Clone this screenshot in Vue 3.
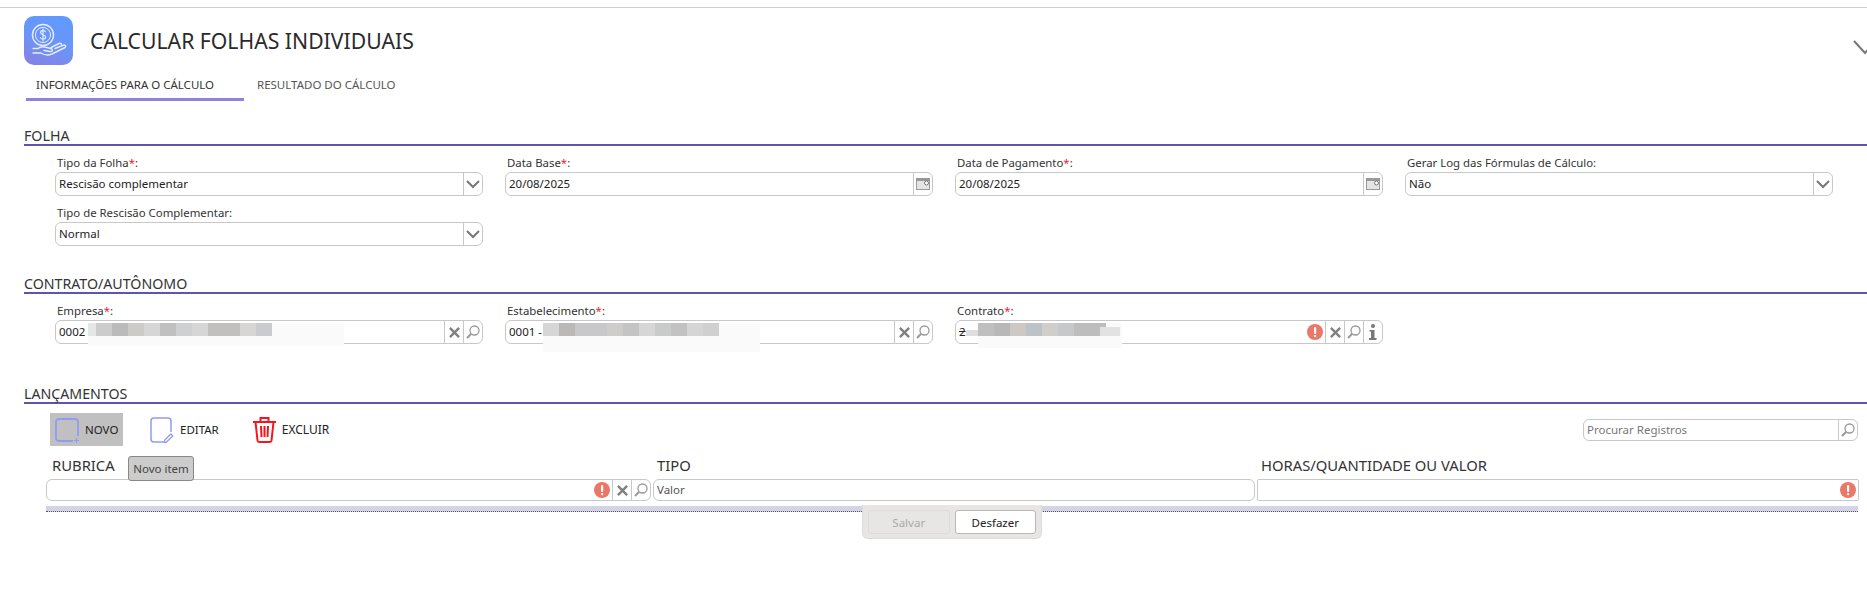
<script setup>
const folha = [
  { label: 'Tipo da Folha', req: true, value: 'Rescisão complementar', kind: 'select' },
  { label: 'Data Base', req: true, value: '20/08/2025', kind: 'date' },
  { label: 'Data de Pagamento', req: true, value: '20/08/2025', kind: 'date' },
  { label: 'Gerar Log das Fórmulas de Cálculo', req: false, value: 'Não', kind: 'select' },
  { label: 'Tipo de Rescisão Complementar', req: false, value: 'Normal', kind: 'select' }
]
const contrato = [
  { label: 'Empresa', value: '0002', info: false, left: 32, wide: 256, h: 23, cls: 'half',
    strip: ['#e6e6e6', '#cccccc', '#bbbbbb', '#cdcbc8', '#d6d6d6', '#c0c0c0', '#cfd0d2', '#d6d6d6', '#c2c0be', '#c2c0be', '#d8d6d4', '#c9cbce'] },
  { label: 'Estabelecimento', value: '0001 -', info: false, left: 37, wide: 217, h: 29, cls: '',
    strip: ['#d6d6d6', '#bbb8b5', '#c8c8ca', '#c8c8ca', '#cfcdca', '#c4c4c4', '#d6d6d6', '#c9cbca', '#c2c2c2', '#d5d5d5', '#d0d0d0'] },
  { label: 'Contrato', value: '2', info: true, left: 22, wide: 144, h: 25, cls: 'tails',
    strip: ['#bfbfbf', '#b8b8b8', '#cdc8c4', '#bcc2c6', '#d0cecb', '#c6c8ca', '#bdbdbd', '#bdbdbd'] }
]
</script>

<template>
  <div class="page">
    <header class="head">
      <div class="logo">
        <svg width="49" height="49" viewBox="0 0 49 49" fill="none" stroke="#e6ecff" stroke-width="1.4" stroke-linecap="round" stroke-linejoin="round">
          <circle cx="19" cy="19" r="10.5" />
          <circle cx="19" cy="19" r="7.6" stroke-width="1" />
          <path d="M21.4 15.8c-.6-1-1.4-1.4-2.4-1.4-1.4 0-2.4.8-2.4 2.1 0 2.9 5 1.6 5 4.5 0 1.3-1.1 2.2-2.6 2.2-1.1 0-2-.5-2.6-1.5M19 13v12" stroke-width="1.2" />
          <path d="M9 37h8c4 2.5 7.6 2.5 11 1l13-6.500c1.500-1 .2-3-1.500-2.400L31 32.500" />
          <path d="M9 32.500h5c2-1.700 4-2.300 6.500-1.500l6.500 1.500c2.300.8 1.500 3.500-1 3l-6-1" />
          <path d="M27 31.500l8-4c1.500-.6 2.700.3 2.600 1.300" />
        </svg>
      </div>
      <h1 class="title">CALCULAR FOLHAS INDIVIDUAIS</h1>
      <svg class="collapse" width="14" height="16" viewBox="0 0 14 16" fill="none" stroke="#777" stroke-width="2"><path d="M1 1l11 12 6-7" /></svg>
    </header>

    <nav class="tabs">
      <span class="tab active">INFORMAÇÕES PARA O CÁLCULO</span>
      <span class="tab">RESULTADO DO CÁLCULO</span>
    </nav>

    <section class="sec sec-folha">
      <h2 class="sec-title">FOLHA</h2>
      <div class="fields">
        <div v-for="f in folha" :key="f.label" class="field">
          <label class="lab">{{ f.label }}<em v-if="f.req">*</em>:</label>
          <div class="box">
            <span class="val">{{ f.value }}</span>
            <span class="btn">
              <svg v-if="f.kind === 'select'" width="14" height="9" viewBox="0 0 14 9" fill="none" stroke="#777" stroke-width="2"><path d="M1 1l6 6 6-6" /></svg>
              <svg v-else width="14" height="12" viewBox="0 0 14 12"><rect x=".5" y=".5" width="13" height="11" fill="#e4e4e4" stroke="#999" /><rect x="1" y="1" width="12" height="2" fill="#999" /><circle cx="10.500" cy="5" r="2" fill="#fff" stroke="#777" /></svg>
            </span>
          </div>
        </div>
      </div>
    </section>

    <section class="sec sec-contrato">
      <h2 class="sec-title">CONTRATO/AUTÔNOMO</h2>
      <div class="fields">
        <div v-for="c in contrato" :key="c.label" class="field">
          <label class="lab">{{ c.label }}<em>*</em>:</label>
          <div class="box">
            <span class="val" :class="{ struck: c.info }">{{ c.value }}</span>
            <div class="mask" :class="c.cls" :style="{ left: c.left + 'px', width: c.wide + 'px', height: c.h + 'px' }">
              <i v-for="(s, i) in c.strip" :key="i" :style="{ background: s }"></i>
            </div>
            <svg v-if="c.info" class="alert" width="16" height="16" viewBox="0 0 16 16"><circle cx="8" cy="8" r="8" fill="#ea7868" /><rect x="7" y="3" width="2.200" height="7" rx="1" fill="#fff" /><rect x="7" y="11" width="2.200" height="2.200" rx="1" fill="#fff" /></svg>
            <span class="btn">
              <svg width="11" height="11" viewBox="0 0 12 12" stroke="#808080" stroke-width="2.600"><path d="M1 1l10 10M11 1L1 11" /></svg>
            </span>
            <span class="btn">
              <svg width="14" height="14" viewBox="0 0 14 14" fill="none" stroke="#999" stroke-width="1.300"><circle cx="8.500" cy="5.500" r="4.500" /><path d="M5.200 8.800L1 13" stroke-width="2" /></svg>
            </span>
            <span v-if="c.info" class="btn">
              <svg width="10" height="16" viewBox="0 0 10 16" fill="#777"><circle cx="5" cy="2" r="2" /><path d="M1.500 6h5v8h2v2H1v-2h2V7.500H1.500z" /></svg>
            </span>
          </div>
        </div>
      </div>
    </section>

    <section class="sec sec-lanc">
      <h2 class="sec-title">LANÇAMENTOS</h2>
      <div class="toolbar">
        <button class="tool hover">
          <svg width="26" height="26" viewBox="0 0 26 26" fill="none" stroke="#8f9cf5" stroke-width="1.800"><path d="M19 24H5a3 3 0 0 1-3-3V5a3 3 0 0 1 3-3h16a3 3 0 0 1 3 3v14" /><path d="M22.500 21v5M20 23.500h5" stroke-width="1.200" /></svg>
          NOVO
        </button>
        <button class="tool">
          <svg width="26" height="28" viewBox="0 0 26 28" fill="none" stroke="#8f9cf5" stroke-width="1.500"><path d="M15 26H5a3 3 0 0 1-3-3V5a3 3 0 0 1 3-3h14a3 3 0 0 1 3 3v11" /><path d="M17 26.500l-1.500-.2.300-2.300 6-6 2 2z" stroke-width="1.300" /></svg>
          EDITAR
        </button>
        <button class="tool del">
          <svg width="25" height="27" viewBox="0 0 25 27" fill="none" stroke="#f5151c" stroke-width="2"><path d="M1 6h23" /><path d="M8.500 5V2h8v3" /><path d="M3.500 6l2 18.500c.1 1 .8 1.500 1.700 1.500h10.600c.9 0 1.600-.5 1.700-1.500L21.500 6" /><path d="M9 10l.5 11M12.500 10v11M16 10l-.5 11" /></svg>
          EXCLUIR
        </button>
        <div class="search">
          <span class="val ph">Procurar Registros</span>
          <span class="btn">
            <svg width="14" height="14" viewBox="0 0 14 14" fill="none" stroke="#999" stroke-width="1.300"><circle cx="8.500" cy="5.500" r="4.500" /><path d="M5.200 8.800L1 13" stroke-width="2" /></svg>
          </span>
        </div>
      </div>

      <div class="grid">
        <div class="col">
          <div class="col-head first">RUBRICA</div>
          <div class="box small">
            <span class="val"></span>
            <svg class="alert" width="16" height="16" viewBox="0 0 16 16"><circle cx="8" cy="8" r="8" fill="#ea7868" /><rect x="7" y="3" width="2.200" height="7" rx="1" fill="#fff" /><rect x="7" y="11" width="2.200" height="2.200" rx="1" fill="#fff" /></svg>
            <span class="btn">
              <svg width="11" height="11" viewBox="0 0 12 12" stroke="#808080" stroke-width="2.600"><path d="M1 1l10 10M11 1L1 11" /></svg>
            </span>
            <span class="btn">
              <svg width="14" height="14" viewBox="0 0 14 14" fill="none" stroke="#999" stroke-width="1.300"><circle cx="8.500" cy="5.500" r="4.500" /><path d="M5.200 8.800L1 13" stroke-width="2" /></svg>
            </span>
          </div>
        </div>
        <div class="col">
          <div class="col-head">TIPO</div>
          <div class="box small"><span class="val grey">Valor</span></div>
        </div>
        <div class="col">
          <div class="col-head">HORAS/QUANTIDADE OU VALOR</div>
          <div class="box small square">
            <span class="val"></span>
            <svg class="alert" width="16" height="16" viewBox="0 0 16 16"><circle cx="8" cy="8" r="8" fill="#ea7868" /><rect x="7" y="3" width="2.200" height="7" rx="1" fill="#fff" /><rect x="7" y="11" width="2.200" height="2.200" rx="1" fill="#fff" /></svg>
          </div>
        </div>
        <div class="tooltip">Novo item</div>
      </div>

      <div class="band">
        <div class="actions">
          <button class="act off">Salvar</button>
          <button class="act">Desfazer</button>
        </div>
      </div>
    </section>
  </div>
</template>

<style>
html, body { margin: 0; background: #fff; overflow: hidden; }
</style>

<style scoped>
.page {
  position: relative;
  height: 607px;
  margin-top: 7px;
  border-top: 1px solid #cfcfcf;
  font-family: "Noto Sans", "DejaVu Sans", sans-serif;
  color: #333;
  overflow: hidden;
  box-sizing: border-box;
}
.head { display: flex; align-items: center; padding: 8px 0 0 24px; height: 49px; position: relative; }
.logo {
  width: 49px; height: 49px; border-radius: 10px;
  background: linear-gradient(200deg, #5e9bff 0%, #6b94f8 55%, #8a7fe0 100%);
}
.title { margin: 0 0 0 17px; font-size: 21.200px; font-weight: 400; line-height: 28px; color: #2a2a2a; }
.collapse { position: absolute; right: 0; top: 32px; }
.tabs { display: flex; margin: 7px 0 0 26px; height: 29px; }
.tab { font-size: 11.500px; line-height: 26px; color: #555; padding: 0 13px; }
.tab.active { width: 208px; padding: 0 0 0 10px; border-bottom: 3px solid #8a84e0; color: #333; height: 26px; }
.sec-title {
  margin: 0 0 0 24px; height: 16px; line-height: 16px; font-size: 14.200px; font-weight: 400; color: #333;
  border-bottom: 2px solid #5c57ae;
}
.sec-folha { margin-top: 27px; }
.sec-contrato { margin-top: 30px; }
.sec-lanc { margin-top: 42px; }
.fields {
  display: grid; grid-template-columns: repeat(4, 428px); column-gap: 22px; row-gap: 9px;
  padding: 9px 0 0 55px;
}
.lab { display: block; height: 17px; line-height: 15px; font-size: 11.400px; padding-left: 2px; color: #333; }
.lab em { font-style: normal; color: #f01c2c; }
.box {
  position: relative; display: flex; align-items: center; height: 24px; box-sizing: border-box;
  border: 1px solid #c8c8c8; border-radius: 6px; background: #fff;
}
.val { flex: 1; padding: 0 0 1px 3px; font-size: 11.500px; color: #222; white-space: nowrap; }
.struck { text-decoration: line-through; }
.btn {
  display: flex; align-items: center; justify-content: center; width: 18px; height: 100%;
  border-left: 1px solid #c8c8c8; flex: none;
}
.alert { flex: none; margin-right: 2px; }
.mask {
  position: absolute; top: 2px; display: flex; align-items: flex-start; background: #fafafa; z-index: 1;
}
.mask i { width: 16px; height: 13px; flex: none; }
.mask.half i:first-child { width: 8px; }
.mask.tails::before { content: ""; position: absolute; left: -12px; top: 7px; width: 12px; height: 6px; background: #dedede; }
.mask.tails::after { content: ""; position: absolute; left: 122px; top: 4px; width: 20px; height: 9px; background: #e2e2e2; }
.toolbar { display: flex; align-items: center; height: 33px; margin-top: 9px; padding: 0 9px 0 50px; }
.tool {
  display: flex; align-items: center; gap: 5px; height: 33px; padding: 0 4px; margin-right: 22px;
  border: 0; background: transparent; font: 11.500px "Noto Sans", sans-serif; color: #222;
}
.tool.hover { background: #c0c0c0; width: 73px; box-sizing: border-box; }
.tool.del { margin-left: 3px; font-size: 12px; }
.search {
  display: flex; align-items: center; margin-left: auto; width: 275px; height: 22px; box-sizing: border-box;
  border: 1px solid #c8c8c8; border-radius: 6px;
}
.ph { color: #777; padding-left: 3px; }
.grid { position: relative; display: grid; grid-template-columns: 605px 602px 602px; column-gap: 2px; padding-left: 46px; margin-top: 6px; }
.col-head { height: 27px; padding-left: 4px; font-size: 14.800px; line-height: 26px; color: #333; }
.col-head.first { padding-left: 6px; }
.box.small { height: 22px; border-radius: 6px; }
.box.square { border-radius: 2px; }
.val.grey { color: #555; }
.tooltip {
  position: absolute; left: 128px; top: 4px; width: 66px; height: 25px; box-sizing: border-box;
  background: #cccccc; border: 1px solid #888; border-radius: 3px; font-size: 11.500px; line-height: 23px;
  text-align: center; color: #444; z-index: 2;
}
.band {
  position: relative; margin: 5px 9px 0 46px; height: 6px; box-sizing: border-box;
  background: #d3d3e6; border-bottom: 1px dotted #555;
}
.actions {
  position: absolute; left: 816px; top: -1px; width: 180px; height: 34px; box-sizing: border-box;
  display: flex; gap: 5px; padding: 5px; background: #e8e6e4; border-radius: 0 0 6px 6px; border: 1px solid #dedcda; border-top: 0;
}
.act {
  flex: 1; height: 24px; border: 1px solid #b8b8b8; border-radius: 3px; background: #fff;
  font: 11.500px "Noto Sans", sans-serif; color: #222; padding: 0;
}
.act.off { background: #e8e6e4; border-color: #dcdcdc; color: #aaa; }
</style>
